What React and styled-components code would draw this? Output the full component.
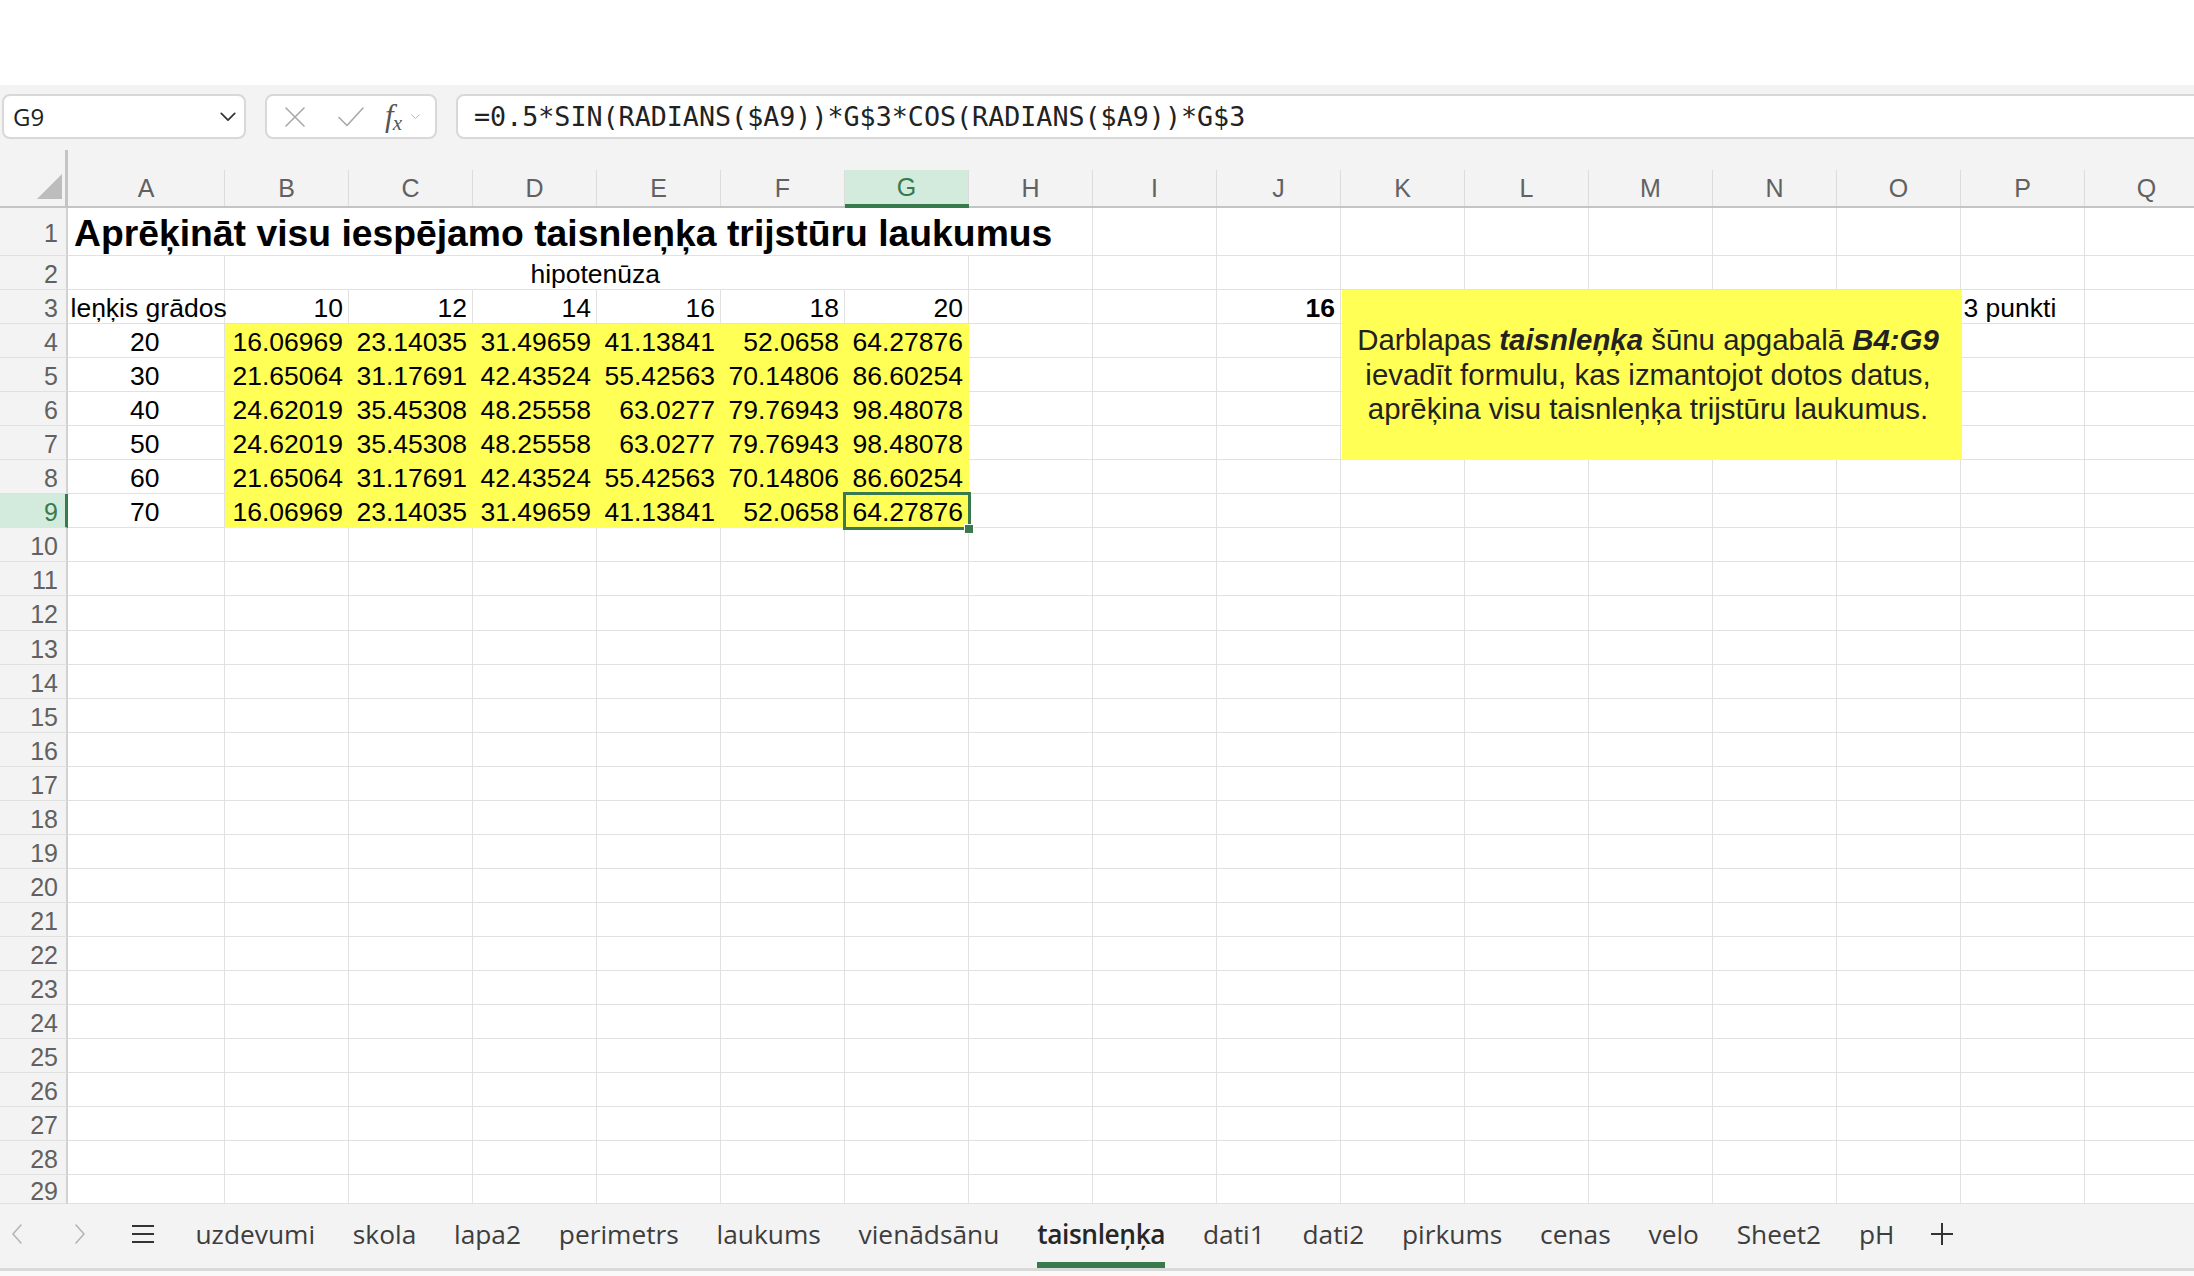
import React from "react";
import styled, { createGlobalStyle, css } from "styled-components";

const GREEN = "#387a4c";
const GREEN_SOFT = "#d3ebdc";
const YELLOW = "#ffff55";
const GRID_LINE = "#e1e1e1";

const COLS = ["A", "B", "C", "D", "E", "F", "G", "H", "I", "J", "K", "L", "M", "N", "O", "P", "Q"];
const HYPS = [10, 12, 14, 16, 18, 20];
const ANGLES = [20, 30, 40, 50, 60, 70];
const TABS = ["uzdevumi", "skola", "lapa2", "perimetrs", "laukums", "vienādsānu", "taisnleņķa", "dati1", "dati2", "pirkums", "cenas", "velo", "Sheet2", "pH"];
const ACTIVE_TAB = "taisnleņķa";
const ACTIVE_COL = "G";
const ACTIVE_ROW = 9;
const ROW_COUNT = 29;

const GlobalStyle = createGlobalStyle`
  html, body {
    margin: 0;
    padding: 0;
    background: #fff;
  }
  body {
    font-family: "Liberation Sans", Arial, sans-serif;
    overflow: hidden;
  }
`;

const Page = styled.div`
  width: 2194px;
  height: 1276px;
  display: flex;
  flex-direction: column;
  background: #fff;
  overflow: hidden;
`;

const TopSpace = styled.div`
  flex: none;
  height: 85px;
  background: #fff;
`;

/* ---------- formula bar ---------- */

const FormulaBar = styled.div`
  flex: none;
  height: 65px;
  box-sizing: border-box;
  padding: 9px 0 0 2px;
  display: flex;
  align-items: flex-start;
  gap: 19px;
  background: #f3f3f3;
  font-family: "Open Sans", "Segoe UI", sans-serif;
`;

const Box = styled.div`
  height: 45px;
  box-sizing: border-box;
  border: 2px solid #d8d8d8;
  border-radius: 8px;
  background: #fff;
  display: flex;
  align-items: center;
`;

const NameBox = styled(Box)`
  width: 244px;
  padding: 0 8px 0 9px;
  justify-content: space-between;
  font-size: 24px;
  color: #222;
`;

const FxBox = styled(Box)`
  width: 172px;
  padding-left: 17px;
`;

const FxSlot = styled.span`
  display: flex;
  align-items: center;
  margin-left: ${(p) => p.$gap || 0}px;
`;

const FxLabel = styled.span`
  font-family: "Liberation Serif", serif;
  font-style: italic;
  font-size: 31px;
  line-height: 1;
  color: #555;
  & sub {
    font-size: 21px;
    vertical-align: -4px;
    margin-left: -1px;
  }
`;

const FormulaInput = styled(Box)`
  flex: 1;
  margin-right: -20px;
  padding-left: 16px;
  font-family: "DejaVu Sans Mono", "Liberation Mono", monospace;
  font-size: 26.7px;
  color: #222;
  white-space: nowrap;
`;

/* ---------- sheet grid ---------- */

const Sheet = styled.div`
  position: relative;
  flex: none;
  height: 1054px;
  overflow: hidden;
  display: grid;
  grid-template-columns: 68px 157px repeat(16, 124px);
  grid-template-rows: 58px 48px repeat(27, 34.05px) minmax(0, 1fr);
  background: #fff;
`;

const Corner = styled.div`
  background: #f3f3f3;
  border-right: 3px solid #c4c4c4;
  border-bottom: 2px solid #c4c4c4;
  box-sizing: border-box;
  display: flex;
  align-items: flex-end;
  justify-content: flex-end;
  padding: 0 3px 7px 0;
`;

const Triangle = styled.div`
  width: 0;
  height: 0;
  border-style: solid;
  border-width: 0 0 25px 25px;
  border-color: transparent transparent #bdbdbd transparent;
`;

const ColHeader = styled.div`
  background: #f3f3f3;
  box-sizing: border-box;
  padding-top: 20px;
  border-bottom: 2px solid #c4c4c4;
  display: flex;
  ${(p) =>
    p.$active &&
    css`
      border-bottom: 4px solid ${GREEN};
    `}
`;

const ColLabel = styled.div`
  flex: 1;
  display: flex;
  align-items: center;
  justify-content: center;
  border-right: 1px solid #dcdcdc;
  font-size: 25px;
  color: #616161;
  ${(p) =>
    p.$active &&
    css`
      background: ${GREEN_SOFT};
      color: ${GREEN};
    `}
`;

const RowHead = styled.div`
  background: #f3f3f3;
  box-sizing: border-box;
  border-right: 2px solid #d2d2d2;
  border-bottom: 1px solid ${GRID_LINE};
  display: flex;
  align-items: center;
  justify-content: flex-end;
  padding: 4px 8px 0 0;
  font-size: 25px;
  line-height: 1;
  color: #616161;
  ${(p) =>
    p.$active &&
    css`
      background: ${GREEN_SOFT};
      color: ${GREEN};
      border-right: 3px solid ${GREEN};
      padding-right: 7px;
    `}
`;

const Cell = styled.div`
  grid-column: span ${(p) => p.$span || 1};
  box-sizing: border-box;
  border-right: 1px solid ${(p) => (p.$fill ? p.$fill : GRID_LINE)};
  border-bottom: 1px solid ${(p) => (p.$fill ? p.$fill : GRID_LINE)};
  background: ${(p) => p.$fill || "transparent"};
  display: flex;
  align-items: center;
  justify-content: ${(p) =>
    p.$align === "right" ? "flex-end" : p.$align === "center" ? "center" : "flex-start"};
  padding: 4px 5px 0 ${(p) => (p.$title ? 6 : 2.5)}px;
  white-space: nowrap;
  font-size: ${(p) => (p.$title ? "37.3px" : "26.5px")};
  font-weight: ${(p) => (p.$bold ? 700 : 400)};
  color: #000;
  ${(p) =>
    p.$selected &&
    css`
      position: relative;
      &::after {
        content: "";
        position: absolute;
        inset: -2px -3px -3px -2px;
        border: 3px solid ${GREEN};
        z-index: 2;
      }
      &::before {
        content: "";
        position: absolute;
        right: -6px;
        bottom: -7px;
        width: 8px;
        height: 8px;
        background: ${GREEN};
        border: 1px solid #fff;
        z-index: 3;
      }
    `}
`;

const NoteBox = styled.div`
  position: absolute;
  left: 1342px;
  top: 140px;
  width: 620px;
  height: 170px;
  box-sizing: border-box;
  padding-right: 8px;
  background: ${YELLOW};
  display: flex;
  align-items: center;
  justify-content: center;
  text-align: center;
  font-size: 29.4px;
  line-height: 34.5px;
  color: #222;
  z-index: 1;
  & b {
    font-style: italic;
  }
`;

/* ---------- sheet tabs ---------- */

const TabBar = styled.div`
  flex: none;
  height: 64px;
  background: #f3f3f3;
  border-bottom: 3px solid #d9d9d9;
  display: flex;
  align-items: center;
  font-family: "Open Sans", "Segoe UI", sans-serif;
`;

const NavButton = styled.div`
  flex: none;
  width: 34px;
  height: 100%;
  margin: 0 ${(p) => p.$after ?? 29}px 0 ${(p) => p.$before || 0}px;
  display: flex;
  align-items: center;
  justify-content: center;
  padding-bottom: 4px;
  box-sizing: border-box;
  color: ${(p) => (p.$muted ? "#b3b3b3" : "#333")};
`;

const Tab = styled.div`
  position: relative;
  flex: none;
  height: 100%;
  box-sizing: border-box;
  padding: 0 18.9px 5px;
  display: flex;
  align-items: center;
  font-size: 26.3px;
  color: #3d3d3d;
  ${(p) =>
    p.$active &&
    css`
      font-weight: 600;
      letter-spacing: -0.4px;
      color: #262626;
      &::after {
        content: "";
        position: absolute;
        left: 18.9px;
        right: 18.9px;
        bottom: 0;
        height: 6px;
        background: ${GREEN};
      }
    `}
`;

const BottomStrip = styled.div`
  flex: 1;
  background: #f9f9f9;
`;

/* ---------- data ---------- */

const area = (deg, h) => {
  const rad = (deg * Math.PI) / 180;
  const v = 0.5 * Math.sin(rad) * h * Math.cos(rad) * h;
  return String(Number(v.toPrecision(7)));
};

function buildRow(r) {
  const cells = [];
  if (r === 1) {
    cells.push({ col: "A", text: "Aprēķināt visu iespējamo taisnleņķa trijstūru laukumus", bold: true, title: true, span: 8 });
    COLS.slice(8).forEach((c) => cells.push({ col: c }));
    return cells;
  }
  if (r === 2) {
    cells.push({ col: "A" });
    cells.push({ col: "B", text: "hipotenūza", align: "center", span: 6 });
    COLS.slice(7).forEach((c) => cells.push({ col: c }));
    return cells;
  }
  if (r === 3) {
    cells.push({ col: "A", text: "leņķis grādos" });
    HYPS.forEach((h, i) => cells.push({ col: COLS[i + 1], text: h, align: "right" }));
    COLS.slice(7).forEach((c) => {
      if (c === "J") cells.push({ col: c, text: "16", align: "right", bold: true });
      else if (c === "P") cells.push({ col: c, text: "3 punkti" });
      else cells.push({ col: c });
    });
    return cells;
  }
  if (r >= 4 && r <= 9) {
    const deg = ANGLES[r - 4];
    cells.push({ col: "A", text: deg, align: "center" });
    HYPS.forEach((h, i) =>
      cells.push({
        col: COLS[i + 1],
        text: area(deg, h),
        align: "right",
        fill: YELLOW,
        selected: r === ACTIVE_ROW && COLS[i + 1] === ACTIVE_COL,
      })
    );
    COLS.slice(7).forEach((c) => cells.push({ col: c }));
    return cells;
  }
  COLS.forEach((c) => cells.push({ col: c }));
  return cells;
}

const rows = Array.from({ length: ROW_COUNT }, (_, i) => i + 1);

/* ---------- icons ---------- */

const ChevronDown = ({ size = 16, color = "#333", stroke = 1.8 }) => (
  <svg width={size} height={size * 0.6} viewBox="0 0 16 10" fill="none">
    <path d="M1 1.5 L8 8.5 L15 1.5" stroke={color} strokeWidth={stroke} strokeLinecap="round" strokeLinejoin="round" />
  </svg>
);

const CrossIcon = () => (
  <svg width="22" height="22" viewBox="0 0 22 22" fill="none">
    <path d="M2 2 L20 20 M20 2 L2 20" stroke="#a8a8a8" strokeWidth="1.6" strokeLinecap="round" />
  </svg>
);

const CheckIcon = () => (
  <svg width="28" height="22" viewBox="0 0 28 22" fill="none">
    <path d="M2 11.5 L10 19.5 L26 2" stroke="#a8a8a8" strokeWidth="1.6" strokeLinecap="round" strokeLinejoin="round" />
  </svg>
);

const ChevronSide = ({ dir }) => (
  <svg width="10" height="20" viewBox="0 0 10 20" fill="none">
    <path
      d={dir === "left" ? "M9 1 L1 10 L9 19" : "M1 1 L9 10 L1 19"}
      stroke="currentColor"
      strokeWidth="1.5"
      strokeLinecap="round"
      strokeLinejoin="round"
    />
  </svg>
);

const MenuIcon = () => (
  <svg width="22" height="18" viewBox="0 0 22 18" fill="none">
    <path d="M0 1 H22 M0 9 H22 M0 17 H22" stroke="#333" strokeWidth="2" />
  </svg>
);

const PlusIcon = () => (
  <svg width="24" height="24" viewBox="0 0 24 24" fill="none">
    <path d="M12 1 V23 M1 12 H23" stroke="#333" strokeWidth="2" />
  </svg>
);

export default function App() {
  return (
    <Page>
      <GlobalStyle />
      <TopSpace />

      <FormulaBar>
        <NameBox>
          <span>G9</span>
          <ChevronDown />
        </NameBox>
        <FxBox>
          <FxSlot>
            <CrossIcon />
          </FxSlot>
          <FxSlot $gap={31}>
            <CheckIcon />
          </FxSlot>
          <FxSlot $gap={20}>
            <FxLabel>
              f<sub>x</sub>
            </FxLabel>
          </FxSlot>
          <FxSlot $gap={9}>
            <ChevronDown size={9} color="#aaa" stroke={1.6} />
          </FxSlot>
        </FxBox>
        <FormulaInput>=0.5*SIN(RADIANS($A9))*G$3*COS(RADIANS($A9))*G$3</FormulaInput>
      </FormulaBar>

      <Sheet>
        <Corner>
          <Triangle />
        </Corner>
        {COLS.map((c) => (
          <ColHeader key={c} $active={c === ACTIVE_COL}>
            <ColLabel $active={c === ACTIVE_COL}>{c}</ColLabel>
          </ColHeader>
        ))}

        {rows.map((r) => (
          <React.Fragment key={r}>
            <RowHead $active={r === ACTIVE_ROW}>{r}</RowHead>
            {buildRow(r).map((cell) => (
              <Cell
                key={cell.col}
                $span={cell.span}
                $align={cell.align}
                $bold={cell.bold}
                $title={cell.title}
                $fill={cell.fill}
                $selected={cell.selected}
              >
                {cell.text}
              </Cell>
            ))}
          </React.Fragment>
        ))}

        <NoteBox>
          <div>
            Darblapas <b>taisnleņķa</b> šūnu apgabalā <b>B4:G9</b>
            <br />
            ievadīt formulu, kas izmantojot dotos datus,
            <br />
            aprēķina visu taisnleņķa trijstūru laukumus.
          </div>
        </NoteBox>
      </Sheet>

      <TabBar>
        <NavButton $muted>
          <ChevronSide dir="left" />
        </NavButton>
        <NavButton $muted>
          <ChevronSide dir="right" />
        </NavButton>
        <NavButton $after={16.6}>
          <MenuIcon />
        </NavButton>
        {TABS.map((t) => (
          <Tab key={t} $active={t === ACTIVE_TAB}>
            {t}
          </Tab>
        ))}
        <NavButton $before={12}>
          <PlusIcon />
        </NavButton>
      </TabBar>
      <BottomStrip />
    </Page>
  );
}
